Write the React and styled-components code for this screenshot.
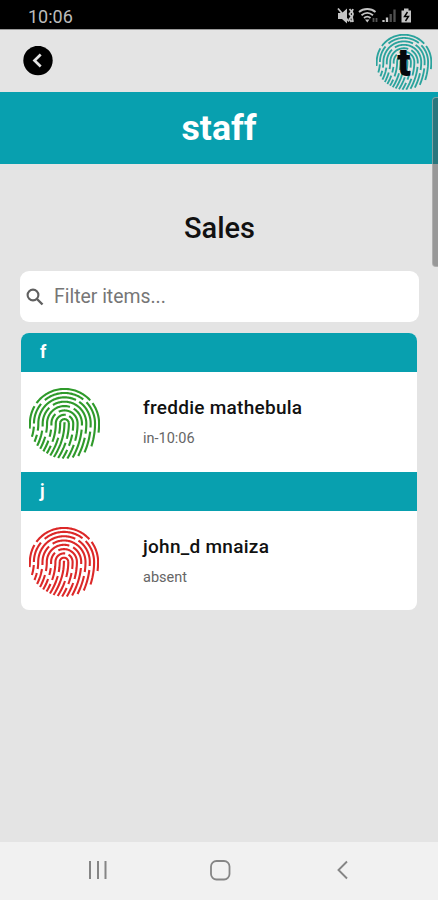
import React from "react";
import styled, { createGlobalStyle } from "styled-components";

const TEAL = "#08a0af";

const GlobalStyle = createGlobalStyle`
  * { box-sizing: border-box; }
  body { margin: 0; background: #e4e4e4; font-family: Roboto, sans-serif; }
`;

const Screen = styled.div`
  position: relative;
  display: flex;
  flex-direction: column;
  width: 438px;
  height: 900px;
  overflow: hidden;
  background: #e4e4e4;
`;

const StatusBar = styled.div`
  display: flex;
  justify-content: space-between;
  height: 29px;
  padding: 3px 25px 0 28px;
  background: #000;
`;

const Clock = styled.span`
  font-size: 18px;
  line-height: 27px;
  color: #bcbcbc;
`;

const StatusIcons = styled.svg`
  width: 76px;
  height: 26px;
`;

const TopBar = styled.header`
  display: flex;
  justify-content: space-between;
  align-items: flex-start;
  height: 63px;
  padding: 4px 6px 0 23px;
  border-top: 1px solid #9a9a9a;
`;

const BackButton = styled.button`
  display: block;
  width: 30px;
  height: 30px;
  margin-top: 12px;
  padding: 0;
  border: 0;
  background: none;

  svg { display: block; }
`;

const Logo = styled.div`
  display: grid;
  place-items: center;
  width: 56px;
  height: 56px;

  > * { grid-area: 1 / 1; }
`;

const LogoLetter = styled.span`
  padding-top: 2px;
  font-size: 39px;
  font-weight: 900;
  line-height: 38px;
  color: #05070c;
`;

const Banner = styled.h1`
  height: 72px;
  margin: 0;
  background: ${TEAL};
  color: #fff;
  font-size: 35.7px;
  font-weight: 700;
  line-height: 72px;
  text-align: center;
`;

const Content = styled.main`
  flex: 1;
  padding: 44px 19px 0 20px;
`;

const Title = styled.h2`
  margin: 0 0 23px;
  font-size: 29px;
  font-weight: 500;
  line-height: 40px;
  text-align: center;
  color: #111;
`;

const SearchBox = styled.label`
  display: flex;
  align-items: center;
  gap: 10px;
  height: 51px;
  padding: 0 6px;
  border-radius: 9px;
  background: #fff;
`;

const SearchInput = styled.input`
  flex: 1;
  min-width: 0;
  padding: 0;
  border: 0;
  outline: 0;
  background: none;
  font: 400 19.4px Roboto, sans-serif;

  &::placeholder { color: #767676; opacity: 1; }
`;

const List = styled.div`
  margin: 11px 2px 0 1px;
  border-radius: 8px;
  overflow: hidden;
  background: #fff;
`;

const Divider = styled.div`
  height: 39px;
  padding-left: 19px;
  background: ${TEAL};
  color: #fff;
  font-size: 17.5px;
  font-weight: 700;
  line-height: 38px;
`;

const Item = styled.div`
  display: grid;
  grid-template-columns: 114px 1fr;
  align-items: start;
  height: ${(p) => p.$height}px;
  padding: 16px 9px 0 8px;
`;

const Details = styled.div`
  display: flex;
  flex-direction: column;
  gap: 7px;
  padding-top: 8px;
`;

const Name = styled.span`
  font-size: 19px;
  font-weight: 500;
  line-height: 24px;
  letter-spacing: 0.27px;
  color: #111;
`;

const Note = styled.span`
  font-size: 14.5px;
  line-height: 24px;
  color: #666;
`;

const NavBar = styled.nav`
  display: flex;
  justify-content: space-between;
  height: 58px;
  padding: 16px 83px 0 85px;
  background: #f1f1f1;

  svg { display: block; }
`;

const ScrollThumb = styled.div`
  position: absolute;
  top: 97px;
  right: -4px;
  width: 10px;
  height: 170px;
  border: 1px solid rgba(190, 190, 190, 0.6);
  border-radius: 4px;
  background: rgba(75, 75, 75, 0.5);
`;

// Ridges are arches with two legs sweeping to the lower left.
// Breaks: arch in degrees, left/right legs in distance below the centre.
const RIDGES = [
  { r: 0.1, arch: [], left: [], right: [] },
  { r: 4.3, arch: [], left: [12], right: [17] },
  { r: 8.6, arch: [70], left: [20], right: [9, 24] },
  { r: 12.9, arch: [125], left: [4, 15], right: [19] },
  { r: 17.2, arch: [65], left: [11], right: [4] },
  { r: 21.5, arch: [128], left: [5], right: [12] },
  { r: 25.8, arch: [60], left: [9], right: [6] },
  { r: 30.1, arch: [135, 48], left: [1], right: [] },
  { r: 34.1, arch: [147, 39], left: [], right: [] },
];

function ridgePath({ r, arch, left, right }) {
  const pts = [];
  const leg = (side, dy, breaks) => {
    const dx = side * r;
    const x = 35 + dx - (0.0095 - 0.00008 * dx) * dy * dy;
    const hidden = breaks.some((b) => Math.abs(dy - b) < 1.6);
    const y = 35 + dy;
    pts.push(hidden || Math.hypot(x - 35, y - 35) > 34.8 ? null : [x, y]);
  };
  for (let dy = 35; dy > 0; dy -= 0.5) leg(-1, dy, left);
  for (let a = 180; a >= 0; a -= 2) {
    const t = (a * Math.PI) / 180;
    const hidden = arch.some((b) => (Math.abs(a - b) * Math.PI * r) / 180 < 1.6);
    pts.push(hidden ? null : [35 + r * Math.cos(t), 35 - r * Math.sin(t)]);
  }
  if (r > 1) for (let dy = 0.5; dy <= 35; dy += 0.5) leg(1, dy, right);
  let pen = "M";
  let d = "";
  pts.forEach((p) => {
    if (!p) {
      pen = "M";
      return;
    }
    d += `${pen}${p[0].toFixed(2)} ${p[1].toFixed(2)}`;
    pen = "L";
  });
  return d;
}

function Fingerprint({ size, color, weight = 2.1 }) {
  return (
    <svg width={size} height={size} viewBox="0 0 70 70" fill="none" stroke={color} strokeWidth={weight}>
      {RIDGES.map((ridge) => (
        <path key={ridge.r} d={ridgePath(ridge)} />
      ))}
    </svg>
  );
}

const STAFF = [
  { letter: "f", name: "freddie mathebula", note: "in-10:06", color: "#2f9a2b", height: 100, size: 71 },
  { letter: "j", name: "john_d mnaiza", note: "absent", color: "#dc2828", height: 99, size: 70 },
];

export default function App() {
  return (
    <Screen>
      <GlobalStyle />
      <StatusBar>
        <Clock>10:06</Clock>
        <StatusIcons viewBox="337 3 76 26" fill="none" stroke="#c4c4c4" strokeWidth="1.8">
          <path d="M338 13h4l5-4.500v15l-5-4.500h-4z" fill="#c4c4c4" stroke="none" />
          <path d="M338 8.500l11 13M349.500 9l2 2.500-2 2.500 2 2.500-2 2.500 2 3M353 9l-1 2.500 1 2.500-1 3 1 5" />
          <path d="M359 12c4.500-4 12-4 16.500 0M361.500 15.300c3.500-3 8-3 11.500 0M364 18c2-1.700 4.500-1.700 6.500 0" />
          <path d="M365 19.500h4.500l-2.200 3z" fill="#c4c4c4" stroke="none" />
          <path d="M373.500 22v-4M376.500 18v4" stroke="#555" />
          <path d="M383.500 22v-2M387 22v-4.500" strokeWidth="2.300" />
          <path d="M390.700 22v-8M394.500 22V9.500" stroke="#505050" strokeWidth="2.300" />
          <path d="M401.500 10.500h2.500V8.500h4.500v2H411V22.500h-9.500z" fill="#c4c4c4" stroke="none" />
          <path d="M407.500 12l-3 4.500h4l-3 4.500" stroke="#000" strokeWidth="1.400" />
        </StatusIcons>
      </StatusBar>
      <TopBar>
        <BackButton aria-label="Back">
          <svg width="30" height="30" viewBox="0 0 30 30" fill="none">
            <circle cx="15" cy="14.500" r="14.700" fill="#000" />
            <path d="M17.700 8.500l-6.200 6 6.200 6" stroke="#e4e4e4" strokeWidth="2.700" />
          </svg>
        </BackButton>
        <Logo>
          <Fingerprint size={56} color="#2aa39d" weight={2.3} />
          <LogoLetter>t</LogoLetter>
        </Logo>
      </TopBar>
      <Banner>staff</Banner>
      <Content>
        <Title>Sales</Title>
        <SearchBox>
          <svg width="18" height="18" viewBox="0 0 18 18" fill="none" stroke="#606060" strokeWidth="2.100">
            <circle cx="7" cy="7" r="5.400" />
            <path d="M11 11l5.500 5.500" strokeWidth="2.400" />
          </svg>
          <SearchInput placeholder="Filter items..." />
        </SearchBox>
        <List>
          {STAFF.map((s) => (
            <React.Fragment key={s.letter}>
              <Divider>{s.letter}</Divider>
              <Item $height={s.height}>
                <Fingerprint size={s.size} color={s.color} />
                <Details>
                  <Name>{s.name}</Name>
                  <Note>{s.note}</Note>
                </Details>
              </Item>
            </React.Fragment>
          ))}
        </List>
      </Content>
      <NavBar>
        <svg width="24" height="24" viewBox="0 0 24 24" stroke="#858585" strokeWidth="2">
          <path d="M5 3v18M13 3v18M20.500 3v18" />
        </svg>
        <svg width="24" height="24" viewBox="0 0 24 24" fill="none" stroke="#858585" strokeWidth="1.800">
          <rect x="3" y="3" width="18.500" height="18.500" rx="5.500" />
        </svg>
        <svg width="24" height="24" viewBox="0 0 24 24" fill="none" stroke="#858585" strokeWidth="1.900">
          <path d="M16 3.500L7.500 12l8.500 8.500" />
        </svg>
      </NavBar>
      <ScrollThumb />
    </Screen>
  );
}
